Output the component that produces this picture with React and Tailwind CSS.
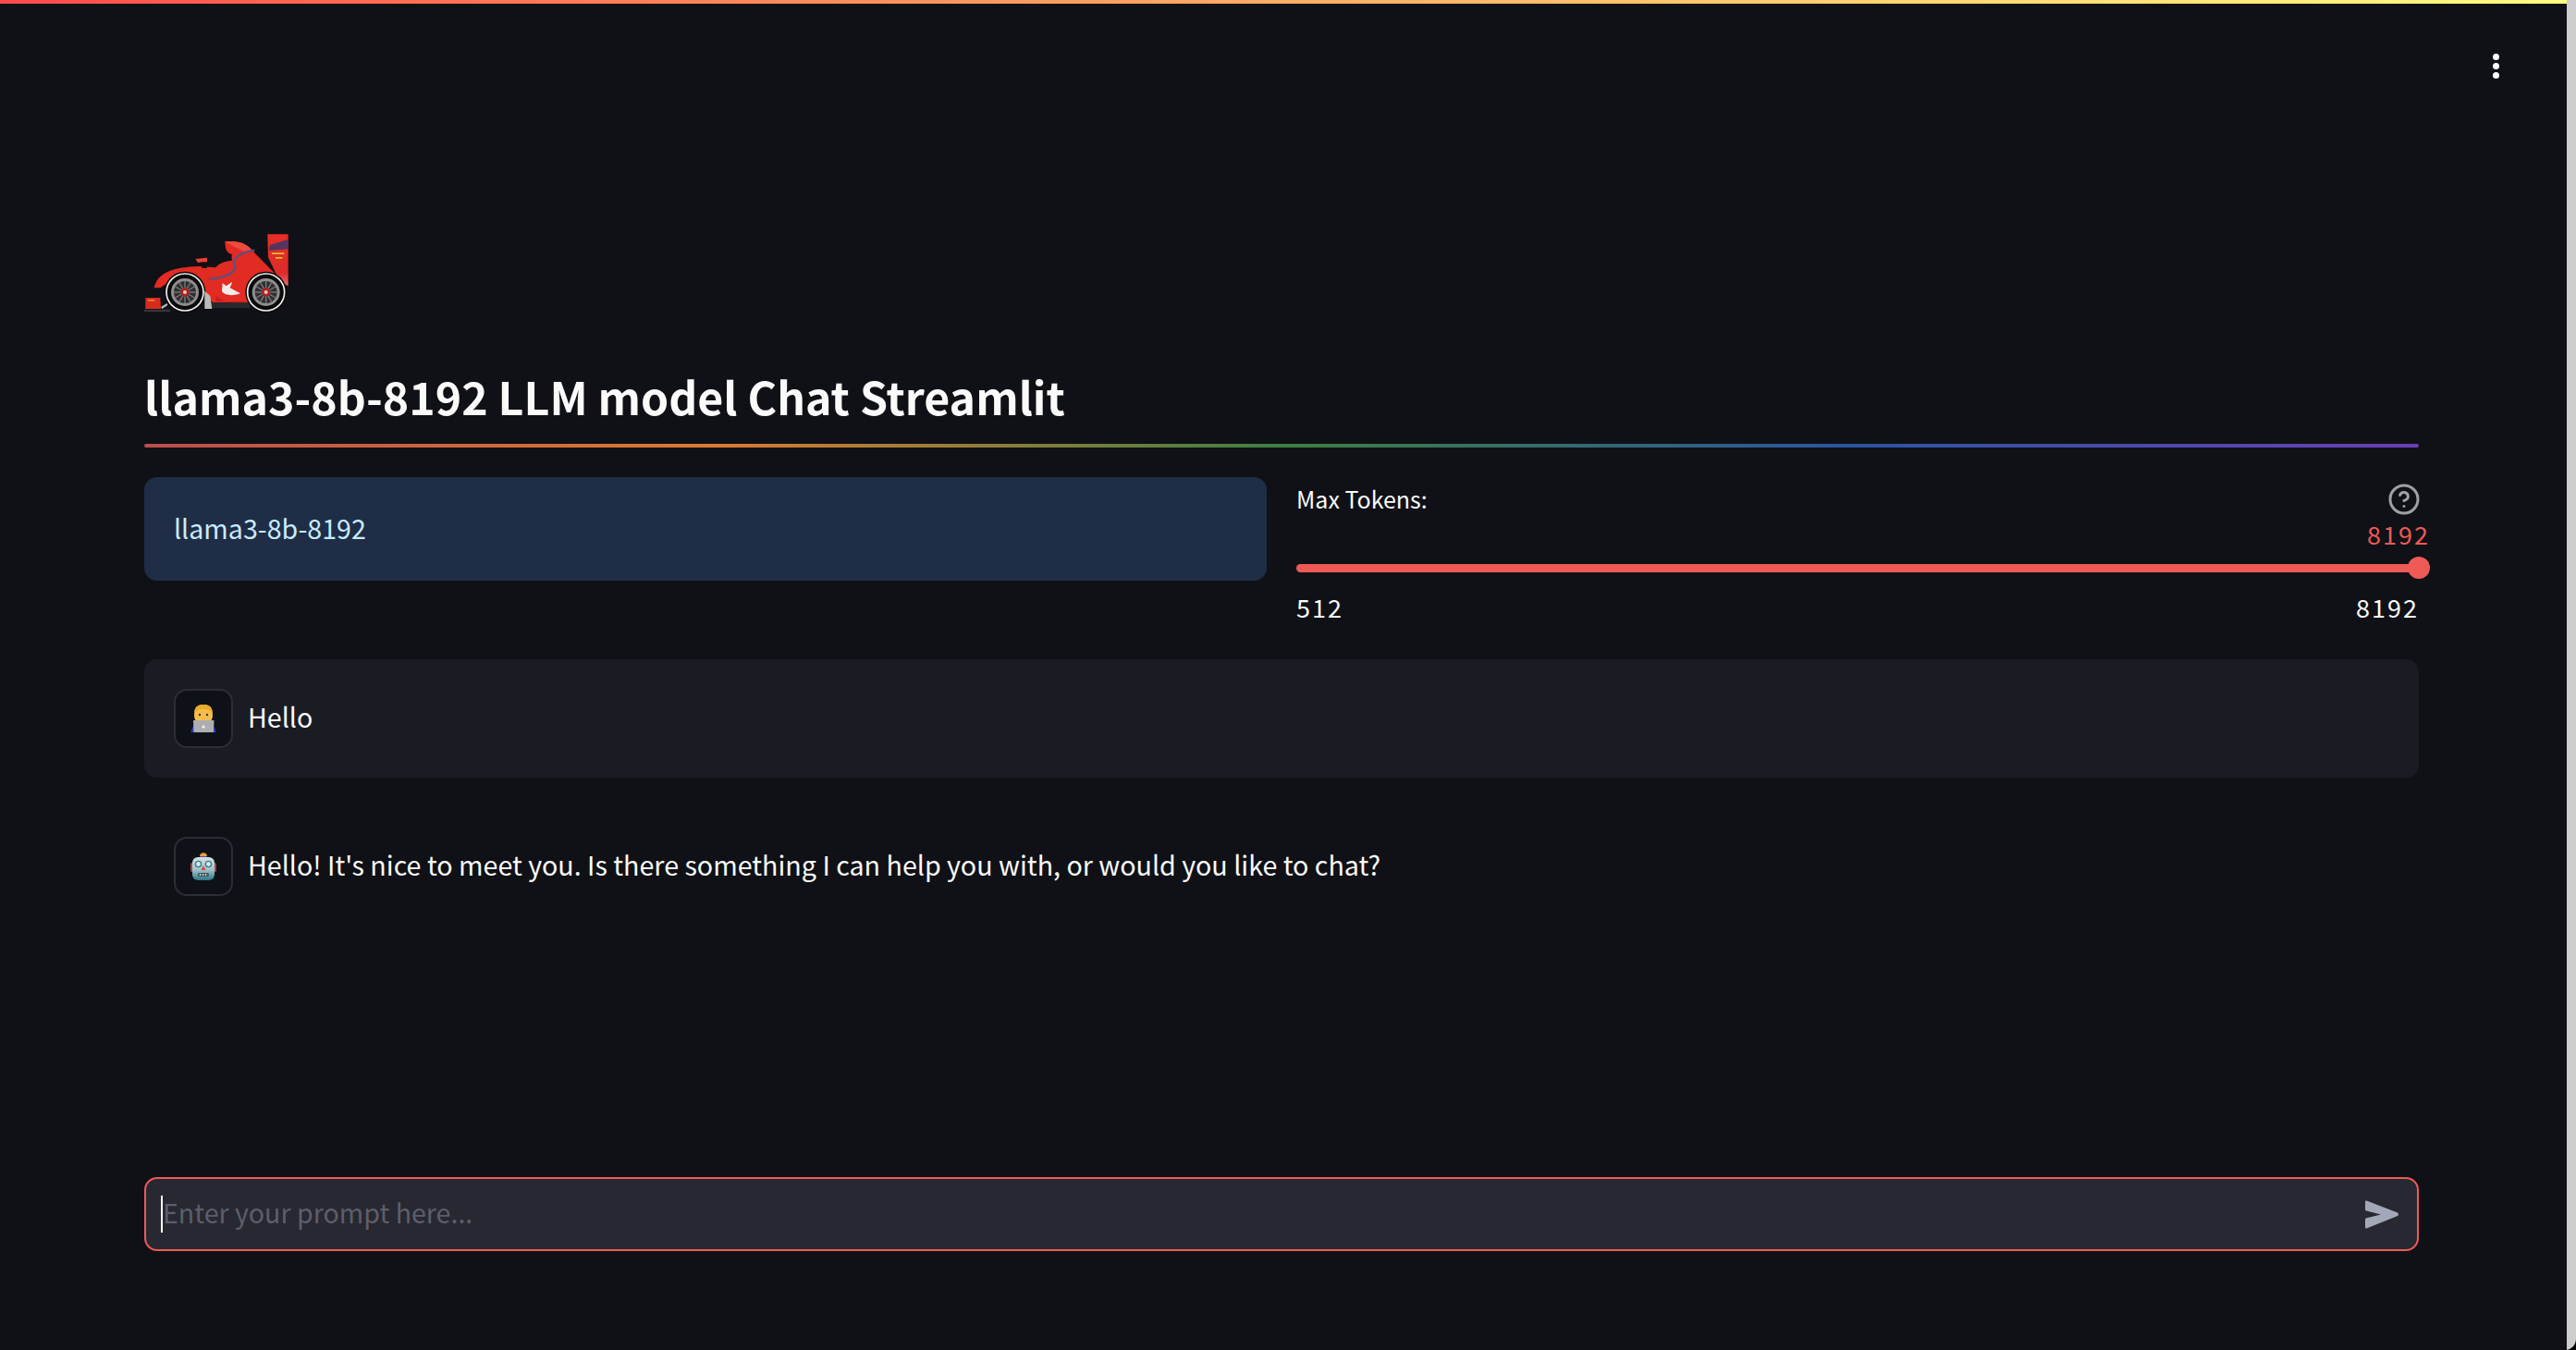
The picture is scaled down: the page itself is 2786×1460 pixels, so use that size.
import React from "react";
import { CircleHelp } from "lucide-react";

const Wheel = ({ cx, cy }) => {
  const spokes = [0, 30, 60, 90, 120, 150];
  return (
    <g>
      <circle cx={cx} cy={cy} r="67" fill="#0b0b0c" />
      <circle cx={cx} cy={cy} r="60" fill="none" stroke="#f0f0f0" strokeWidth="5" />
      <circle cx={cx} cy={cy} r="45" fill="#8f8f90" />
      <circle cx={cx} cy={cy} r="36" fill="#2f2f31" />
      {spokes.map((a) => (
        <line
          key={a}
          x1={cx - 36 * Math.cos((a * Math.PI) / 180)}
          y1={cy - 36 * Math.sin((a * Math.PI) / 180)}
          x2={cx + 36 * Math.cos((a * Math.PI) / 180)}
          y2={cy + 36 * Math.sin((a * Math.PI) / 180)}
          stroke="#7c7c7e"
          strokeWidth="4"
        />
      ))}
      <circle cx={cx} cy={cy} r="14" fill="#b3201c" />
      <circle cx={cx} cy={cy} r="6" fill="#cfcfcf" />
    </g>
  );
};

const RaceCar = () => (
  <svg viewBox="18 39 468 255" className="w-[156px] h-[85px] block">
    <defs>
      <linearGradient id="wing" x1="0" y1="0" x2="0" y2="1">
        <stop offset="0" stopColor="#e62e24" />
        <stop offset="0.75" stopColor="#dc2c2a" />
        <stop offset="1" stopColor="#ee6a6a" />
      </linearGradient>
    </defs>
    <path d="M418 40 L485 40 L485 208 L450 190 L444 165 L420 115 Z" fill="url(#wing)" />
    <path d="M426 75 L485 56 L485 88 L422 93 Z" fill="#54355f" />
    <rect x="432" y="100" width="40" height="5" fill="#f1c232" />
    <rect x="444" y="114" width="22" height="5" fill="#f1c232" />
    <path d="M50 214 C60 170 100 146 200 144 L250 148 C262 132 285 126 302 126 L302 105 C288 102 280 92 280 64 C320 60 350 68 368 92 L445 170 C470 200 470 240 440 262 L240 262 L210 225 L90 200 L70 214 Z" fill="#e22b22" />
    <path d="M280 64 C320 60 350 68 368 92 L340 96 C320 84 300 78 280 64 Z" fill="#ef4a3e" />
    <path d="M376 92 C340 96 312 112 308 132 C325 160 290 180 228 186" fill="none" stroke="#5e4f7d" strokeWidth="7" />
    <path d="M250 240 C290 270 340 270 370 258 L250 258 Z" fill="#c41f1c" />
    <path d="M184 120 L222 116 L222 130 L192 132 Z" fill="#e8403a" />
    <path d="M198 132 L214 130 L222 150 L206 150 Z" fill="#1a0d0d" />
    <path d="M232 262 L362 262 L362 280 L232 280 Z" fill="#26292b" />
    <Wheel cx={150} cy={228} />
    <Wheel cx={413} cy={228} />
    <path d="M214 224 L232 240 L238 282 L214 282 Z" fill="#bdbbb7" />
    <path d="M272 198 L284 208 L304 194 L296 214 L330 232 C306 240 282 240 270 226 Z" fill="#f4ecea" />
    <path d="M22 246 L70 246 L72 282 L22 282 Z" fill="#d92a20" />
    <rect x="30" y="253" width="22" height="3" fill="#f1c232" />
    <path d="M18 284 L100 284 L104 292 L18 292 Z" fill="#33383a" />
    <path d="M72 276 L92 264 L94 270 L76 282 Z" fill="#b9bcc0" />
  </svg>
);

const CoderEmoji = () => (
  <svg viewBox="0 0 28 30" className="w-[28px] h-[30px] block">
    <path d="M0 30 L3 23 L25 23 L28 30 Z" fill="#2438c4" />
    <path d="M4 12 C4 2 8 0 14 0 C20 0 24 2 24 12 C24 18 19 21 14 21 C9 21 4 18 4 12 Z" fill="#f4bd4c" />
    <path d="M4 10 C4 2 9 0 14 0 C19 0 24 2 24 10 C22 6 18 5 14 5 C10 5 6 6 4 10 Z" fill="#e8ad2e" />
    <circle cx="10" cy="11" r="1.2" fill="#4a2b12" />
    <circle cx="18" cy="11" r="1.2" fill="#4a2b12" />
    <path d="M3 17 L25.5 17 L25 30 L3.5 30 Z" fill="#acaeb2" />
    <circle cx="14" cy="24" r="1.6" fill="#f4f4f4" />
  </svg>
);

const RobotEmoji = () => (
  <svg viewBox="0 0 28 30" className="w-[28px] h-[30px] block">
    <defs>
      <linearGradient id="robotHead" x1="0" y1="0" x2="0" y2="1">
        <stop offset="0" stopColor="#d3e2e2" />
        <stop offset="0.55" stopColor="#9cc3ca" />
        <stop offset="1" stopColor="#2a7686" />
      </linearGradient>
    </defs>
    <rect x="12" y="2" width="4" height="4" fill="#d9a13b" />
    <path d="M10 4 C10 -1 18 -1 18 4 Z" fill="#e6a23c" />
    <path d="M10 4 L18 4 L17 6 L11 6 Z" fill="#6a4aa0" />
    <rect x="0" y="11" width="4" height="10" rx="1.5" fill="#a5423f" />
    <rect x="24" y="11" width="4" height="10" rx="1.5" fill="#a5423f" />
    <rect x="2" y="5" width="24" height="25" rx="6" fill="url(#robotHead)" />
    <circle cx="8.5" cy="12.5" r="3.8" fill="#4d7582" />
    <circle cx="19.5" cy="12.5" r="3.8" fill="#4d7582" />
    <circle cx="8.5" cy="12.5" r="2.4" fill="#c4f0fb" />
    <circle cx="19.5" cy="12.5" r="2.4" fill="#c4f0fb" />
    <path d="M14 14 L16.5 19 L11.5 19 Z" fill="#d24b45" />
    <rect x="8" y="22" width="12" height="4" rx="1.5" fill="#4a5658" />
    <rect x="10" y="23" width="1.2" height="2" fill="#e4e4e4" />
    <rect x="13" y="23" width="1.2" height="2" fill="#e4e4e4" />
    <rect x="16" y="23" width="1.2" height="2" fill="#e4e4e4" />
  </svg>
);

const ChatMessage = ({ avatar, text, shaded }) => (
  <div className={`flex items-center gap-4 h-[128px] px-8 rounded-[14px] ${shaded ? "bg-[#1a1c24]" : ""}`}>
    <div className="flex items-center justify-center w-[64px] h-[64px] rounded-[14px] border-2 border-[#2c2d37] bg-[#0e1117]">
      {avatar}
    </div>
    <p className="text-[#fafafa] text-[28.65px] leading-none pb-1">{text}</p>
  </div>
);

export default function App() {
  return (
    <div className="w-[2786px] h-[1460px] bg-black overflow-hidden">
      <div className="flex w-full h-full bg-[#cdcdcd] rounded-br-[12px] font-['Noto_Sans_CJK_SC','Liberation_Sans',sans-serif]">
        <main className="relative w-[2776px] h-full bg-[#0f1116] flex flex-col">
          <div className="h-1 w-full bg-linear-to-r from-[#ff4b4b] to-[#fffd80]" />

          {/* three dot menu */}
          <div className="absolute top-[58px] left-[2696px] flex flex-col gap-[3px]">
            <span className="w-[7px] h-[7px] rounded-full bg-white" />
            <span className="w-[7px] h-[7px] rounded-full bg-white" />
            <span className="w-[7px] h-[7px] rounded-full bg-white" />
          </div>

          <div className="flex flex-col pl-[156px] pr-[160px] pt-[249px]">
            <RaceCar />

            <h2 className="mt-[58px] h-[64px] text-[48.25px] leading-[64px] font-semibold text-[#fafafa]">
              llama3-8b-8192 LLM model Chat Streamlit
            </h2>
            <div className="mt-5 h-1 rounded-full bg-[linear-gradient(to_right,#b94f4a,#dc7a35_25%,#3d8040_50%,#2a55a0_75%,#6b3fb5)]" />

            <div className="mt-8 grid grid-cols-2 gap-8 h-[197px]">
              <div className="h-[112px] flex items-center px-8 pb-[2px] rounded-[14px] bg-[#1f2e46] text-[#c7ebff] text-[28.6px]">
                llama3-8b-8192
              </div>
              <div className="flex flex-col">
                <div className="flex items-center justify-between h-[48px] -mr-[2px]">
                  <span className="text-[25px] text-[#fafafa]">Max Tokens:</span>
                  <CircleHelp size={36} strokeWidth={2} className="text-[#a0a0a2]" />
                </div>
                <div className="-mr-3 -mt-[3px] h-[34px] text-right text-[27px] leading-[34px] tracking-[2px] text-[#ee5a55]">
                  8192
                </div>
                <div className="relative mt-[15px] h-[9px] rounded-full bg-[#ee5a55]">
                  <span className="absolute -right-3 -top-2 w-6 h-6 rounded-full bg-[#ee5a55]" />
                </div>
                <div className="mt-[21px] flex justify-between text-[27px] leading-[34px] tracking-[2px] text-[#fafafa]">
                  <span>512</span>
                  <span>8192</span>
                </div>
              </div>
            </div>

            <ChatMessage shaded avatar={<CoderEmoji />} text="Hello" />
            <div className="mt-8">
              <ChatMessage
                avatar={<RobotEmoji />}
                text="Hello! It's nice to meet you. Is there something I can help you with, or would you like to chat?"
              />
            </div>

            <div className="mt-[272px] h-[80px] flex items-center justify-between pl-4 pr-5 rounded-[14px] border-2 border-[#ee5a55] bg-[#272831]">
              <div className="flex items-center">
                <span className="w-[2px] h-10 bg-white" />
                <span className="text-[28.6px] leading-10 text-[#5d5e6a] pb-1">Enter your prompt here...</span>
              </div>
              <svg viewBox="0 0 36 31" className="w-9 h-[31px]">
                <path
                  d="M1.5 0.5 L35 13.5 C36.3 14.5 36.3 16 35 17 L1.5 30.5 C0.6 30.8 0 30 0 29 L0 21 C0 20 0.6 19.5 1.5 19.2 L17 15.5 L1.5 11.5 C0.6 11.2 0 10.8 0 10 L0 2 C0 0.8 0.6 0.2 1.5 0.5 Z"
                  fill="#a3a8b8"
                />
              </svg>
            </div>
          </div>
        </main>
      </div>
    </div>
  );
}
